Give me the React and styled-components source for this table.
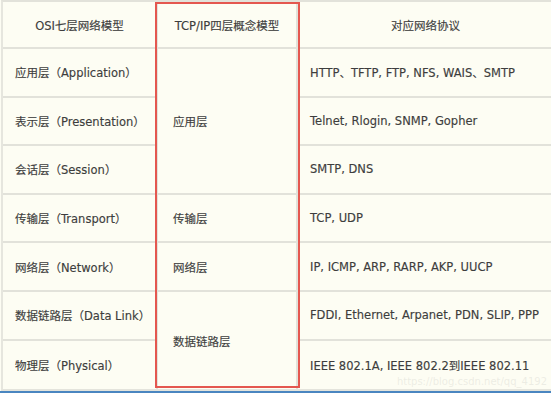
import React from "react";
import styled, { createGlobalStyle } from "styled-components";

const GlobalStyle = createGlobalStyle`
    html, body {
        margin: 0;
        padding: 0;
        background: #fdfdf3;
        overflow: hidden;
    }
    body {
        width: 551px;
        height: 393px;
        font-family: "DejaVu Sans", "Noto Sans CJK SC", sans-serif;
    }
`;

const Page = styled.div`
    position: relative;
    width: 551px;
    height: 393px;
    overflow: hidden;
    background: #fdfdf3;
`;

const Table = styled.div`
    display: grid;
    grid-template-columns: 155px 140px 257px;
    grid-template-rows: 47px repeat(7, 48.6px);
    margin-left: 1px;
    border-top: 2px solid #e2e2da;
    border-left: 2px solid #e6e6de;
    border-bottom: 2px solid #e4e4dc;
`;

const Cell = styled.div`
    box-sizing: border-box;
    display: flex;
    align-items: center;
    justify-content: ${props => (props.head ? "center" : "flex-start")};
    padding-left: ${props => (props.head ? "0" : props.pad || "12px")};
    border-right: 2px solid #e2e2da;
    border-bottom: ${props => (props.last ? "none" : "2px solid #e2e2da")};
    grid-row: ${props => props.row || "auto"};
    grid-column: ${props => props.col || "auto"};
    font-size: 11.5px;
    color: #3d3d3d;
    white-space: nowrap;
    -webkit-text-stroke: 0.15px #3d3d3d;
`;

const Highlight = styled.div`
    position: absolute;
    left: 155px;
    top: 2px;
    width: 145px;
    height: 386px;
    box-sizing: border-box;
    border: 2px solid #e4574f;
    pointer-events: none;
`;

const BlueBar = styled.div`
    position: absolute;
    left: 0;
    right: 0;
    bottom: 0;
    height: 2px;
    background: #4a86c0;
`;

const Watermark = styled.div`
    position: absolute;
    right: 4px;
    top: 376px;
    font-family: "DejaVu Sans", sans-serif;
    font-size: 10px;
    color: rgba(205, 205, 200, 0.35);
    white-space: nowrap;
`;

const osi = [
    "应用层（Application）",
    "表示层（Presentation）",
    "会话层（Session）",
    "传输层（Transport）",
    "网络层（Network）",
    "数据链路层（Data Link）",
    "物理层（Physical）",
];

const tcp = [
    { text: "应用层", row: "2 / 5" },
    { text: "传输层", row: "5 / 6" },
    { text: "网络层", row: "6 / 7" },
    { text: "数据链路层", row: "7 / 9", last: true },
];

const protocols = [
    "HTTP、TFTP, FTP, NFS, WAIS、SMTP",
    "Telnet, Rlogin, SNMP, Gopher",
    "SMTP, DNS",
    "TCP, UDP",
    "IP, ICMP, ARP, RARP, AKP, UUCP",
    "FDDI, Ethernet, Arpanet, PDN, SLIP, PPP",
    "IEEE 802.1A, IEEE 802.2到IEEE 802.11",
];

const App = () => (
    <Page>
        <GlobalStyle />
        <Table>
            <Cell head col="1" row="1">OSI七层网络模型</Cell>
            <Cell head col="2" row="1">TCP/IP四层概念模型</Cell>
            <Cell head col="3" row="1">对应网络协议</Cell>
            {osi.map((text, i) => (
                <Cell key={text} col="1" row={`${i + 2}`} last={i === 6}>
                    {text}
                </Cell>
            ))}
            {tcp.map(item => (
                <Cell key={item.text} col="2" row={item.row} last={item.last} pad="15px">
                    {item.text}
                </Cell>
            ))}
            {protocols.map((text, i) => (
                <Cell key={text} col="3" row={`${i + 2}`} last={i === 6} pad="12px">
                    {text}
                </Cell>
            ))}
        </Table>
        <Highlight />
        <Watermark>https://blog.csdn.net/qq_4192</Watermark>
        <BlueBar />
    </Page>
);

export default App;
